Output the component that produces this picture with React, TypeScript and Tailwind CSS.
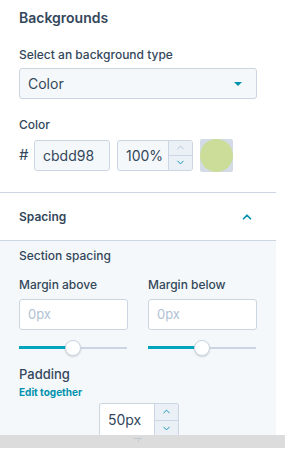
import { ChevronDown, ChevronUp } from "lucide-react";

const font = { fontFamily: "Inter, 'Noto Sans', sans-serif" };

function Slider({ pct }: { pct: number }) {
  return (
    <div className="relative h-4 w-[108px]">
      <div className="absolute left-0 right-0 top-[7px] h-[2px] bg-[#cbd6e2]" />
      <div className="absolute left-0 top-[6px] h-[3px] bg-[#00a4bd]" style={{ width: `${pct}%` }} />
      <div
        className="absolute top-0 h-4 w-4 -translate-x-1/2 rounded-full border border-[#cbd6e2] bg-white shadow-[0_1px_2px_rgba(0,0,0,.15)]"
        style={{ left: `${pct}%` }}
      />
    </div>
  );
}

function Spinner({ h, upActive }: { h: string; upActive?: boolean }) {
  return (
    <div className={`flex w-[23px] flex-col bg-[#eaf0f6] ${h}`}>
      <div className="flex flex-1 items-center justify-center border-b border-[#cbd6e2]">
        <ChevronUp size={11} strokeWidth={2} className={upActive ? "text-[#0091ae]" : "text-[#b0c1d4]"} />
      </div>
      <div className="flex flex-1 items-center justify-center">
        <ChevronDown size={11} strokeWidth={2} className="text-[#0091ae]" />
      </div>
    </div>
  );
}

export default function App() {
  return (
    <div className="w-[285px] bg-white text-[#33475b]" style={font}>
      <div className="w-[276px]">
        <div className="border-b border-[#cbd6e2] px-[19px] pb-[21px]">
          <div className="mt-2 text-[14px] font-semibold leading-5">Backgrounds</div>
          <div className="mt-[19px] text-[12px] font-medium leading-4">Select an background type</div>
          <div className="mt-[5px] flex h-[31px] w-[238px] items-center justify-between rounded-[3px] border border-[#cbd6e2] bg-[#f5f8fa] pl-2 pr-[14px]">
            <span className="text-[14px]">Color</span>
            <span className="h-0 w-0 border-x-[4px] border-t-[4px] border-x-transparent border-t-[#0091ae]" />
          </div>
          <div className="mt-[18px] text-[12px] font-medium leading-4">Color</div>
          <div className="mt-[6px] flex h-8 items-center">
            <span className="w-[15px] text-[15px]">#</span>
            <div className="flex h-[31px] w-[76px] items-center rounded-[3px] border border-[#cbd6e2] bg-[#f5f8fa] pl-2 text-[14px]">
              cbdd98
            </div>
            <div className="ml-[7px] flex h-[31px] w-[76px] overflow-hidden rounded-[3px] border border-[#cbd6e2] bg-[#f5f8fa]">
              <div className="flex flex-1 items-center pl-2 text-[14px]">100%</div>
              <div className="border-l border-[#cbd6e2]">
                <Spinner h="h-[29px]" />
              </div>
            </div>
            <div className="ml-[7px] h-[33px] w-[33px] shrink-0 rounded-[2px] bg-[#d3dbe6]">
              <div className="h-full w-full rounded-full bg-[#cbdd98]" />
            </div>
          </div>
        </div>

        <div className="flex h-12 items-center justify-between border-b border-[#cbd6e2] pl-[19px] pr-[22px]">
          <span className="text-[12px] font-semibold">Spacing</span>
          <ChevronUp size={14} strokeWidth={3} className="text-[#0091ae]" />
        </div>

        <div className="bg-[#f5f8fa] px-[19px] pt-[7px]">
          <div className="text-[12px] font-medium leading-4">Section spacing</div>
          <div className="mt-[13px] flex gap-5">
            {["Margin above", "Margin below"].map((label) => (
              <div key={label} className="w-[109px]">
                <div className="text-[12px] font-medium leading-4">{label}</div>
                <div className="mt-[6px] flex h-[31px] items-center rounded-[3px] border border-[#cbd6e2] bg-white pl-2 text-[13px] text-[#b0c1d4]">
                  0px
                </div>
                <div className="mt-[10px]">
                  <Slider pct={50} />
                </div>
              </div>
            ))}
          </div>
          <div className="mt-[10px] text-[13px] font-medium leading-4">Padding</div>
          <div className="mt-[3px] text-[10px] font-bold leading-[14px] text-[#0091ae]">Edit together</div>
          <div className="mt-1 flex justify-center pl-[2px]">
            <div className="flex h-8 w-20 overflow-hidden rounded-t-[3px] border border-b-0 border-[#cbd6e2] bg-white">
              <div className="flex flex-1 items-center pl-2 text-[14px]">50px</div>
              <div className="border-l border-[#cbd6e2]">
                <Spinner h="h-8" upActive />
              </div>
            </div>
          </div>
        </div>
      </div>
      <div className="flex h-[13px] w-[285px] justify-center bg-[#dcdcdc] pr-[9px] pt-[3px]">
        <div className="flex flex-col items-center">
          <div className="h-px w-2 bg-[#c0c8d2]" />
          <div className="h-[3px] w-px bg-[#c0c8d2]" />
        </div>
      </div>
    </div>
  );
}
